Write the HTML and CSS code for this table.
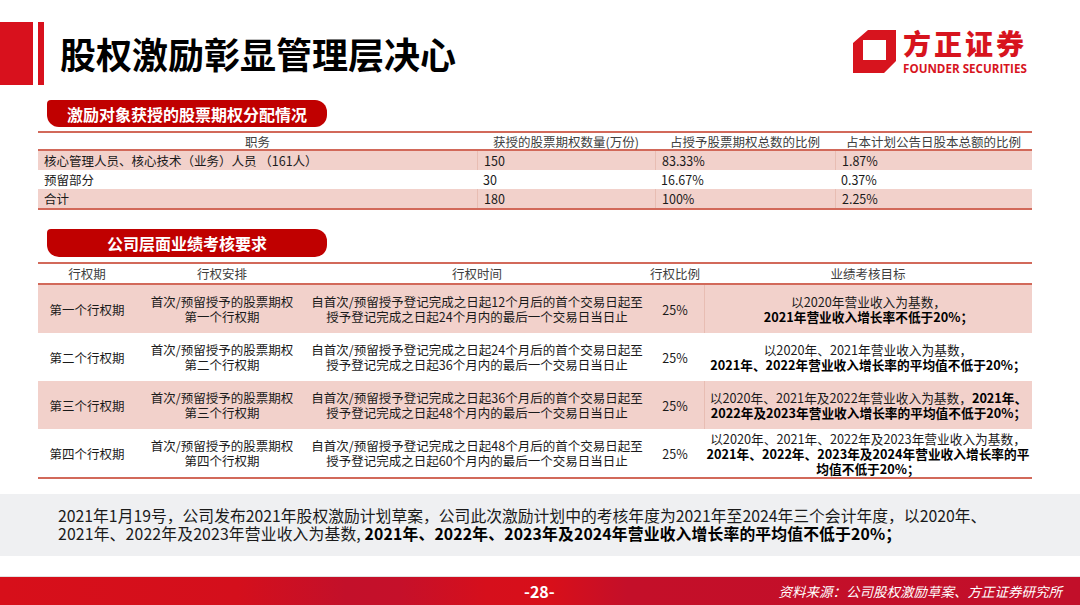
FILE: index.html
```html
<!DOCTYPE html>
<html lang="zh-CN">
<head>
<meta charset="utf-8">
<title>股权激励彰显管理层决心</title>
<link rel="stylesheet" href="styles.css">
</head>
<body>
<div class="page">
  <header class="top">
    <div class="bar-wide"></div>
    <div class="bar-thin"></div>
    <h1 class="title">股权激励彰显管理层决心</h1>
    <div class="logo">
      <svg class="logo-mark" width="43" height="43" viewBox="0 0 43 43">
        <path fill="#d7141e" fill-rule="evenodd" d="M15 0 H43 V31 L31 43 H0 V13 Z M10 10 V30 H33 V10 Z"/>
      </svg>
      <div class="logo-text">
        <div class="logo-cn">方正证券</div>
        <div class="logo-en">FOUNDER SECURITIES</div>
      </div>
    </div>
  </header>

  <div class="pill pill-1">激励对象获授的股票期权分配情况</div>

  <div class="t1">
    <div class="hd">
      <div>职务</div>
      <div>获授的股票期权数量(万份)</div>
      <div>占授予股票期权总数的比例</div>
      <div>占本计划公告日股本总额的比例</div>
    </div>
    <div class="r pink">
      <div>核心管理人员、核心技术（业务）人员 （161人）</div>
      <div>150</div>
      <div>83.33%</div>
      <div>1.87%</div>
    </div>
    <div class="r">
      <div>预留部分</div>
      <div>30</div>
      <div>16.67%</div>
      <div>0.37%</div>
    </div>
    <div class="r pink">
      <div>合计</div>
      <div>180</div>
      <div>100%</div>
      <div>2.25%</div>
    </div>
  </div>

  <div class="pill pill-2">公司层面业绩考核要求</div>

  <div class="t2">
    <div class="hd">
      <div>行权期</div>
      <div>行权安排</div>
      <div>行权时间</div>
      <div>行权比例</div>
      <div>业绩考核目标</div>
    </div>
    <div class="r pink">
      <div><p>第一个行权期</p></div>
      <div><p>首次/预留授予的股票期权<br>第一个行权期</p></div>
      <div><p>自首次/预留授予登记完成之日起12个月后的首个交易日起至<br>授予登记完成之日起24个月内的最后一个交易日当日止</p></div>
      <div><p>25%</p></div>
      <div class="goal"><p>以2020年营业收入为基数，<br><b>2021年营业收入增长率不低于20%；</b></p></div>
    </div>
    <div class="r">
      <div><p>第二个行权期</p></div>
      <div><p>首次/预留授予的股票期权<br>第二个行权期</p></div>
      <div><p>自首次/预留授予登记完成之日起24个月后的首个交易日起至<br>授予登记完成之日起36个月内的最后一个交易日当日止</p></div>
      <div><p>25%</p></div>
      <div class="goal"><p>以2020年、2021年营业收入为基数，<br><b>2021年、2022年营业收入增长率的平均值不低于20%；</b></p></div>
    </div>
    <div class="r pink">
      <div><p>第三个行权期</p></div>
      <div><p>首次/预留授予的股票期权<br>第三个行权期</p></div>
      <div><p>自首次/预留授予登记完成之日起36个月后的首个交易日起至<br>授予登记完成之日起48个月内的最后一个交易日当日止</p></div>
      <div><p>25%</p></div>
      <div class="goal"><p>以2020年、2021年及2022年营业收入为基数，<b>2021年、</b><br><b>2022年及2023年营业收入增长率的平均值不低于20%；</b></p></div>
    </div>
    <div class="r">
      <div><p>第四个行权期</p></div>
      <div><p>首次/预留授予的股票期权<br>第四个行权期</p></div>
      <div><p>自首次/预留授予登记完成之日起48个月后的首个交易日起至<br>授予登记完成之日起60个月内的最后一个交易日当日止</p></div>
      <div><p>25%</p></div>
      <div class="goal"><p>以2020年、2021年、2022年及2023年营业收入为基数，<br><b>2021年、2022年、2023年及2024年营业收入增长率的平</b><br><b>均值不低于20%；</b></p></div>
    </div>
  </div>

  <div class="note">
    <p>2021年1月19号，公司发布2021年股权激励计划草案，公司此次激励计划中的考核年度为2021年至2024年三个会计年度，以2020年、</p>
    <p class="wide">2021年、2022年及2023年营业收入为基数, <b>2021年、2022年、2023年及2024年营业收入增长率的平均值不低于20%；</b></p>
  </div>

  <footer class="foot">
    <span class="pageno">-28-</span>
    <span class="source">资料来源：公司股权激励草案、方正证券研究所</span>
  </footer>
</div>
</body>
</html>
```

FILE: styles.css
```css
* {
  box-sizing: border-box;
  margin: 0;
  padding: 0;
}

body {
  margin: 0;
  width: 1080px;
  height: 605px;
  overflow: hidden;
  background: #ffffff;
  font-family: "Noto Sans CJK SC", "Noto Sans", sans-serif;
  color: #1a1a1a;
}

.page {
  display: flex;
  flex-direction: column;
  width: 1080px;
  height: 605px;
}

.page > * {
  flex-shrink: 0;
}

/* ---------- header ---------- */
.top {
  display: flex;
  align-items: flex-start;
  height: 100px;
}

.bar-wide {
  width: 33px;
  height: 63px;
  margin-top: 22px;
  background: #d8111d;
}

.bar-thin {
  width: 6px;
  height: 63px;
  margin-top: 22px;
  margin-left: 5px;
  background: #d8111d;
}

.title {
  margin-left: 16px;
  margin-top: 34px;
  font-size: 36px;
  line-height: 38px;
  font-weight: 700;
  color: #000;
}

.logo {
  display: flex;
  align-items: flex-start;
  margin-left: auto;
  margin-right: 44px;
  margin-top: 30px;
}

.logo-mark {
  display: block;
}

.logo-text {
  margin-left: 7px;
  display: flex;
  flex-direction: column;
}

.logo-cn {
  font-size: 28px;
  line-height: 28px;
  letter-spacing: 3px;
  font-weight: 900;
  color: #d7141e;
  margin-top: -1px;
}

.logo-en {
  font-family: "Open Sans", "Liberation Sans", sans-serif;
  font-size: 12.5px;
  line-height: 12px;
  font-weight: 700;
  color: #d7141e;
  margin-top: 6px;
  white-space: nowrap;
  transform: scaleX(0.93);
  transform-origin: left center;
}

/* ---------- section pills ---------- */
.pill {
  margin-left: 47px;
  width: 280px;
  height: 27px;
  background: #c00000;
  color: #fff;
  font-size: 16px;
  font-weight: 700;
  display: flex;
  align-items: center;
  justify-content: center;
  border-radius: 4px 12px 12px 12px;
}

.pill-2 {
  margin-top: 19px;
  height: 28px;
}

/* ---------- table 1 ---------- */
.t1 {
  margin-top: 4px;
  margin-left: 38px;
  width: 994px;
  border-top: 2px solid #d2695a;
  border-bottom: 2px solid #d2695a;
  font-size: 12.5px;
}

.t1 .hd,
.t1 .r {
  display: grid;
  grid-template-columns: 439px 178px 180px 197px;
}

.t1 .hd {
  height: 18px;
  line-height: 18px;
  color: #404040;
  text-align: center;
  border-bottom: 2px solid #d2695a;
}

.t1 .r {
  height: 19px;
  line-height: 19px;
}

.t1 .r > div {
  padding-left: 6px;
  white-space: nowrap;
}

.pink {
  background: #f2d1cb;
}

.t1 .r.pink > div + div {
  border-left: 1px solid #e8bdb3;
}

/* ---------- table 2 ---------- */
.t2 {
  margin-top: 5px;
  margin-left: 38px;
  width: 994px;
  border-top: 2px solid #d2695a;
  border-bottom: 2px solid #d2695a;
  font-size: 12.5px;
}

.t2 .hd,
.t2 .r {
  display: grid;
  grid-template-columns: 98px 172px 338px 58px 328px;
}

.t2 .hd {
  height: 21px;
  line-height: 19px;
  color: #404040;
  text-align: center;
  border-bottom: 2px solid #d2695a;
}

.t2 .r {
  height: 48px;
}

.t2 .r > div {
  display: flex;
  align-items: center;
  justify-content: center;
  text-align: center;
  line-height: 15px;
  white-space: nowrap;
}

.t2 .r > div.goal {
  font-size: 12.7px;
}

.t2 .r.pink > div.goal {
  border-left: 1px solid #e8bdb3;
}

.t2 b {
  font-weight: 700;
  color: #000;
}

/* ---------- note ---------- */
.note {
  margin-top: 15px;
  height: 62px;
  background: #eff0f2;
  padding-left: 58px;
  display: flex;
  flex-direction: column;
  justify-content: center;
  font-size: 15.8px;
  line-height: 18px;
  color: #1a1a1a;
  white-space: nowrap;
}

.note .wide {
  letter-spacing: 0.15px;
}

.note b {
  font-weight: 700;
  color: #000;
}

/* ---------- footer ---------- */
.foot {
  margin-top: auto;
  height: 29px;
  border-top: 1px solid #e2e2e2;
  display: flex;
  align-items: center;
  color: #fff;
  background: linear-gradient(90deg, #d70f1a 0%, #d40f1c 22%, #c3102a 32%, #c5102a 37%, #d60f1c 45%, #d80f1a 51%, #c40f29 58%, #c20f2a 100%);
}

.pageno {
  margin-left: 524px;
  font-size: 16px;
  font-weight: 700;
}

.source {
  margin-left: auto;
  margin-right: 18px;
  font-size: 13.5px;
  font-style: italic;
}
```
